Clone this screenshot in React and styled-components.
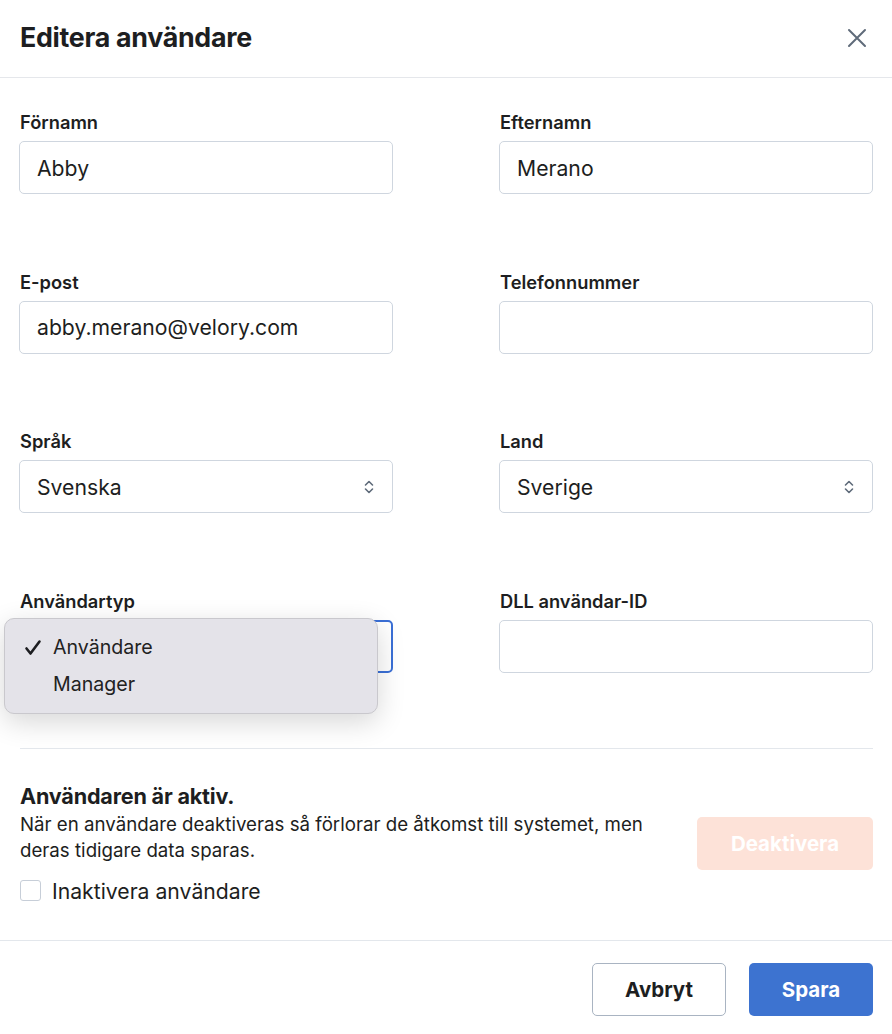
import styled, { createGlobalStyle } from "styled-components";

const GlobalStyle = createGlobalStyle`
  html, body {
    margin: 0;
    padding: 0;
    background: #ffffff;
  }
  body {
    font-family: Inter, "Noto Sans", "Liberation Sans", sans-serif;
    color: #1d1e21;
  }
`;

const Dialog = styled.div`
  width: 892px;
  height: 1034px;
  display: flex;
  flex-direction: column;
  background: #fff;
`;

const Header = styled.header`
  height: 77px;
  display: flex;
  align-items: center;
  justify-content: space-between;
  padding: 0 20px;
  border-bottom: 1px solid #e5e7eb;
`;

const Title = styled.h1`
  margin: 0 0 3px 0;
  font-size: 26.8px;
  font-weight: 700;
  letter-spacing: -0.3px;
  color: #1d1e21;
`;

const CloseButton = styled.button`
  border: none;
  background: none;
  padding: 0;
  margin: 0 4px 2px 0;
  display: flex;
  color: #5f6b7a;
  cursor: pointer;
`;

const Body = styled.div`
  flex: 1;
  padding: 34px 19px 0 19px;
`;

const FieldGrid = styled.div`
  display: grid;
  grid-template-columns: 374px 374px;
  justify-content: space-between;
  row-gap: 77.5px;
`;

const Field = styled.div`
  position: relative;
  display: flex;
  flex-direction: column;
`;

const Label = styled.label`
  font-size: 18.3px;
  line-height: 20px;
  font-weight: 600;
  margin: 0 0 9px 1px;
  color: #1d1e21;
`;

const InputBox = styled.div`
  height: 53px;
  box-sizing: border-box;
  border: 1px solid ${(p) => (p.$focused ? "#3a6fd6" : "#cfd6df")};
  border-width: ${(p) => (p.$focused ? "2px" : "1px")};
  border-radius: 5px;
  display: flex;
  align-items: center;
  justify-content: space-between;
  padding: 0 17px;
  font-size: 21.2px;
  color: #1d1e21;
`;

const Chevrons = () => (
  <svg width="12" height="16" viewBox="0 0 12 16" fill="none">
    <path d="M2.5 6l3.5-3.5L9.5 6M2.5 10l3.5 3.5L9.5 10" stroke="#5f6b7a" strokeWidth="1.6" strokeLinecap="round" strokeLinejoin="round" />
  </svg>
);

const Menu = styled.div`
  position: absolute;
  left: -15px;
  top: 27px;
  width: 374px;
  height: 96px;
  box-sizing: border-box;
  background: #e4e3e9;
  border: 1px solid #c9c8cd;
  border-radius: 10px;
  box-shadow: 0 8px 28px rgba(0, 0, 0, 0.16);
  padding: 10px 0;
  display: flex;
  flex-direction: column;
  z-index: 2;
`;

const MenuItem = styled.div`
  height: 38px;
  display: flex;
  align-items: center;
  padding-left: 48px;
  position: relative;
  font-size: 19.6px;
  color: #222;
`;

const Check = styled.span`
  position: absolute;
  left: 19px;
  top: 10px;
  display: flex;
`;

const Divider = styled.hr`
  border: none;
  border-top: 1px solid #e3e7ec;
  margin: 75px 0 0 1px;
`;

const ActiveSection = styled.section`
  display: flex;
  align-items: center;
  justify-content: space-between;
  padding: 35px 0 0 1px;
`;

const ActiveText = styled.div`
  display: flex;
  flex-direction: column;
`;

const SectionTitle = styled.h2`
  margin: 0;
  font-size: 21.6px;
  line-height: 24px;
  font-weight: 700;
  letter-spacing: -0.2px;
`;

const Description = styled.p`
  margin: 4px 0 0 0;
  font-size: 18.7px;
  line-height: 26px;
  width: 650px;
  color: #1d1e21;
`;

const CheckRow = styled.label`
  display: flex;
  align-items: center;
  gap: 11px;
  margin-top: 14px;
  font-size: 21.2px;
`;

const CheckBox = styled.span`
  width: 21px;
  height: 21px;
  box-sizing: border-box;
  border: 1px solid #c7ced8;
  border-radius: 3px;
`;

const Button = styled.button`
  height: 53px;
  box-sizing: border-box;
  border-radius: 5px;
  font-family: inherit;
  font-size: 20.5px;
  font-weight: 700;
  cursor: pointer;
  padding: 0;
  width: ${(p) => p.$width}px;
  border: 1px solid ${(p) => (p.$variant === "outline" ? "#a9b4c2" : "transparent")};
  background: ${(p) =>
    p.$variant === "primary" ? "#3d73d0" : p.$variant === "danger" ? "#fde2d8" : "#fff"};
  color: ${(p) => (p.$variant === "outline" ? "#1d1e21" : "#fff")};
`;

const Footer = styled.footer`
  height: 94px;
  flex-shrink: 0;
  box-sizing: border-box;
  border-top: 1px solid #e3e7ec;
  display: flex;
  justify-content: flex-end;
  align-items: flex-start;
  gap: 23px;
  padding: 22px 19px 0 0;
`;

const fields = [
  { label: "Förnamn", value: "Abby" },
  { label: "Efternamn", value: "Merano" },
  { label: "E-post", value: "abby.merano@velory.com" },
  { label: "Telefonnummer", value: "" },
  { label: "Språk", value: "Svenska", select: true },
  { label: "Land", value: "Sverige", select: true },
  { label: "Användartyp", value: "", focused: true, menu: true },
  { label: "DLL användar-ID", value: "" },
];

const App = () => {
  return (
    <Dialog>
      <GlobalStyle />
      <Header>
        <Title>Editera användare</Title>
        <CloseButton aria-label="Stäng">
          <svg width="22" height="22" viewBox="0 0 22 22" fill="none">
            <path d="M3 3l16 16M19 3L3 19" stroke="currentColor" strokeWidth="2" strokeLinecap="round" />
          </svg>
        </CloseButton>
      </Header>
      <Body>
        <FieldGrid>
          {fields.map((f) => (
            <Field key={f.label}>
              <Label>{f.label}</Label>
              <InputBox $focused={f.focused}>
                <span>{f.value}</span>
                {f.select && <Chevrons />}
              </InputBox>
              {f.menu && (
                <Menu>
                  <MenuItem>
                    <Check>
                      <svg width="18" height="18" viewBox="0 0 18 18" fill="none">
                        <path d="M2.5 9.5l4 5L15.5 2.5" stroke="#1d1e21" strokeWidth="2.6" strokeLinecap="round" strokeLinejoin="round" />
                      </svg>
                    </Check>
                    Användare
                  </MenuItem>
                  <MenuItem>Manager</MenuItem>
                </Menu>
              )}
            </Field>
          ))}
        </FieldGrid>
        <Divider />
        <ActiveSection>
          <ActiveText>
            <SectionTitle>Användaren är aktiv.</SectionTitle>
            <Description>
              När en användare deaktiveras så förlorar de åtkomst till systemet, men deras tidigare data sparas.
            </Description>
            <CheckRow>
              <CheckBox />
              Inaktivera användare
            </CheckRow>
          </ActiveText>
          <Button $variant="danger" $width={176}>Deaktivera</Button>
        </ActiveSection>
      </Body>
      <Footer>
        <Button $variant="outline" $width={134}>Avbryt</Button>
        <Button $variant="primary" $width={124}>Spara</Button>
      </Footer>
    </Dialog>
  );
};

export default App;
